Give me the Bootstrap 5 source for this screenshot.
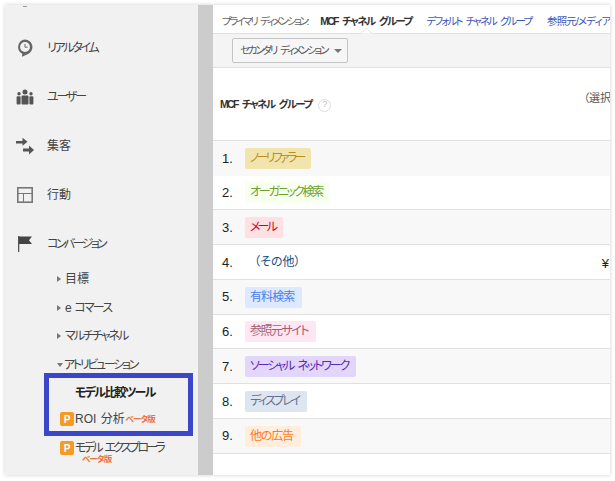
<!DOCTYPE html>
<html lang="ja"><head><meta charset="utf-8"><title>MCF</title>
<link href="https://cdn.jsdelivr.net/npm/bootstrap@5.3.0/dist/css/bootstrap.min.css" rel="stylesheet">
<style>
html,body{height:100%;}
body{background:#fff;font-family:"Liberation Sans","Noto Sans CJK JP",sans-serif;font-size:12px;color:#333;overflow:hidden;font-feature-settings:"palt";word-spacing:3px;}
.shell{position:relative;margin:5px 5px 0 5px;width:605px;height:470px;display:flex;box-shadow:0 0 4px rgba(0,0,0,.2);overflow:hidden;white-space:nowrap;}
.side{width:193px;flex:none;background:#f1f1f1;padding-top:1px;}
.stub{width:4px;height:1px;background:#999;margin:0 0 16px 18px;}
.gutter{width:15px;flex:none;background:#ccc;}
.main{flex:1;min-width:0;background:#fff;overflow:hidden;}
.top-item{height:49px;display:flex;align-items:center;color:#444;padding-top:1px;}
.top-item svg{width:18px;height:18px;margin-left:11px;margin-right:13px;flex:none;}
.subs{margin-top:-3px;}
.sub-item{height:28.5px;display:flex;align-items:center;padding-left:52px;color:#444;font-size:12px;}
.tri-r{width:0;height:0;border-left:4px solid #777;border-top:3.5px solid transparent;border-bottom:3.5px solid transparent;margin-right:4px;}
.tri-d{width:0;height:0;border-top:4px solid #777;border-left:3.5px solid transparent;border-right:3.5px solid transparent;margin-right:1px;}
.picked{padding-left:70px;font-weight:700;color:#222;height:28px;display:flex;align-items:center;font-size:12px;}
.pro{display:flex;align-items:center;padding-left:55px;color:#444;font-size:12px;height:24px;}
.pro2{margin-top:5px;}
.roi{word-spacing:1px;}
.pmark{width:14px;height:14px;background:#f59a23;color:#fff;border-radius:2px;font-size:10px;font-weight:700;display:flex;align-items:center;justify-content:center;margin-right:1px;flex:none;}
.beta{color:#e8743b;font-size:8.5px;font-weight:700;letter-spacing:-.9px;}
.beta-in{margin-left:1px;}
.beta2{padding-left:77px;line-height:10px;margin-top:-6px;}
.frame{position:absolute;left:39px;top:368px;width:149px;height:63px;border:5px solid #3c46c8;}
.tabs{height:29px;border-bottom:1px solid #e0e0e0;display:flex;align-items:center;padding:6px 0 0 9px;font-size:10.5px;color:#666;position:relative;}
.tabs b{color:#333;margin-left:13px;letter-spacing:-1.7px;}
.tabs a{color:#3b55b5;text-decoration:none;margin-left:15px;letter-spacing:-1.9px;}
.tabs a.ref{letter-spacing:-.9px;margin-left:16px;}
.tabs i{position:absolute;left:149px;bottom:-5px;width:9px;height:9px;background:#fff;border-top:1px solid #e0e0e0;border-left:1px solid #e0e0e0;transform:rotate(45deg);clip-path:polygon(0 0,100% 0,0 100%);}
.bar{height:34px;background:#f4f4f4;border-bottom:1px solid #e0e0e0;padding:4px 0 0 19px;}
.sel{height:25px;width:116px;padding:0 5px 0 7px;border:1px solid #c4c4c4;border-radius:2px;background:#f6f6f6;display:flex;align-items:center;justify-content:space-between;color:#555;font-size:10.5px;letter-spacing:-2.2px;}
.caret-d{width:0;height:0;border-top:4px solid #777;border-left:4px solid transparent;border-right:4px solid transparent;margin-right:0;}
.head{height:73px;border-bottom:1px solid #e0e0e0;display:flex;align-items:center;padding:2px 0 0 7px;position:relative;font-weight:700;font-size:10.5px;color:#333;}
.head-t{letter-spacing:-1.7px;}
.help{width:13px;height:13px;border:1px solid #ddd;border-radius:50%;color:#bbb;font-size:9px;font-weight:400;display:flex;align-items:center;justify-content:center;margin-left:7px;}
.sel-note{position:absolute;right:-1px;top:22px;font-weight:400;font-size:11px;color:#555;}
.line{height:34.75px;display:flex;align-items:center;border-bottom:1px solid #e0e0e0;position:relative;font-size:13px;color:#222;padding-top:1px;}
.line.alt{background:#f8f8f8;}
.line.first{border-bottom:0;height:34.5px;padding-top:0;}
.num{width:32px;padding-left:9px;flex:none;}
.tag{padding:0 8px 0 5px;height:21px;line-height:21px;border-radius:2px;font-size:12px;}
.t1{background:#f1e4ac;color:#b8901e;letter-spacing:-2.8px;}.t2{background:#f7ffee;color:#6e9e2e;letter-spacing:-2.2px;}.t3{background:#ffe0e3;color:#d0021b;letter-spacing:-2.8px;}.t4{color:#1d4f80;padding-left:9px;}.t5{background:#dde9ff;color:#4a80ee;letter-spacing:-.9px;}.t6{background:#ffe6f3;color:#a06070;letter-spacing:-1.5px;}.t7{background:#e2d6fa;color:#5a2ab8;letter-spacing:-2.1px;}.t8{background:#dde5f0;color:#5f7390;letter-spacing:-2.3px;}.t9{background:#ffeedd;color:#ff7a22;letter-spacing:-1.2px;}
.yen{position:absolute;right:1px;top:9px;font-size:13px;}
.k2{letter-spacing:-2px;}.k18{letter-spacing:-1.8px;}.k17{letter-spacing:-1.7px;}.k22{letter-spacing:-2.2px;}.k23{letter-spacing:-2.3px;}.k26{letter-spacing:-2.6px;}.k27{letter-spacing:-2.7px;}
</style></head><body>
<div class="shell">
<nav class="side">
<div class="stub"></div>
<div class="top-item"><svg viewBox="0 0 18 18"><path fill="#666" d="M9 .5a7.6 7.6 0 0 1 2.600 14.700L6 17.800l.2-3A7.600 7.600 0 0 1 9 .5z"/><circle cx="9" cy="8" r="4.900" fill="#f1f1f1"/><path d="M9 5v3.200h2.600" fill="none" stroke="#666" stroke-width="1"/></svg><span class="k23">リアルタイム</span></div>
<div class="top-item"><svg viewBox="0 0 18 18" fill="#555"><circle cx="9" cy="4" r="2.500"/><circle cx="3" cy="5.700" r="1.700"/><circle cx="15" cy="5.700" r="1.700"/><rect x="5.500" y="7.400" width="7" height="9" rx="1"/><rect x=".6" y="8.200" width="4" height="8.200" rx="1"/><rect x="13.400" y="8.200" width="4" height="8.200" rx="1"/></svg><span class="k22">ユーザー</span></div>
<div class="top-item"><svg viewBox="0 0 18 18" fill="#555"><path d="M0 4h6.500V.8l5 4-5 4V6.500H0z"/><path d="M7 11.500h6V8.500l5 4.500-5 4.500v-3H7z"/></svg><span>集客</span></div>
<div class="top-item"><svg viewBox="0 0 18 18" fill="none" stroke="#777" stroke-width="1.600"><rect x="1.800" y="1.800" width="14.400" height="14.400"/><path d="M2 7.500h14M7.500 7.500V16" stroke-width="1"/></svg><span>行動</span></div>
<div class="top-item"><svg viewBox="0 0 18 18"><path fill="#555" d="M2 1h1.300v16H2z"/><path fill="#444" d="M3 1.500h13l-3 3.800 3 3.800H3z"/></svg><span class="k26">コンバージョン</span></div>
<div class="subs">
<div class="sub-item"><span class="tri-r"></span>目標</div>
<div class="sub-item"><span class="tri-r"></span><span class="k18">e コマース</span></div>
<div class="sub-item"><span class="tri-r"></span><span class="k2">マルチチャネル</span></div>
<div class="sub-item"><span class="tri-d"></span><span class="k23">アトリビューション</span></div>
</div>
<div class="picked"><span class="k17">モデル比較ツール</span></div>
<div class="pro"><span class="pmark">P</span><span class="roi">ROI 分析</span><span class="beta beta-in">ベータ版</span></div>
<div class="pro pro2"><span class="pmark">P</span><span class="k27">モデル エクスプローラ</span></div>
<div class="beta beta2">ベータ版</div>
</nav>
<div class="gutter"></div>
<main class="main">
<div class="tabs"><span class="k23">プライマリ ディメンション:</span><b>MCF チャネル グループ</b><a href="#">デフォルト チャネル グループ</a><a class="ref" href="#">参照元/メディア</a><i></i></div>
<div class="bar"><div class="sel"><span>セカンダリ ディメンション</span><span class="caret-d"></span></div></div>
<div class="head"><span class="head-t">MCF チャネル グループ</span><span class="help">?</span><span class="sel-note">（選択</span></div>
<div class="line alt first"><span class="num">1.</span><span class="tag t1">ノーリファラー</span></div>
<div class="line"><span class="num">2.</span><span class="tag t2">オーガニック検索</span></div>
<div class="line alt"><span class="num">3.</span><span class="tag t3">メール</span></div>
<div class="line"><span class="num">4.</span><span class="tag t4">（その他）</span><span class="yen">¥</span></div>
<div class="line alt"><span class="num">5.</span><span class="tag t5">有料検索</span></div>
<div class="line"><span class="num">6.</span><span class="tag t6">参照元サイト</span></div>
<div class="line alt"><span class="num">7.</span><span class="tag t7">ソーシャル ネットワーク</span></div>
<div class="line"><span class="num">8.</span><span class="tag t8">ディスプレイ</span></div>
<div class="line alt"><span class="num">9.</span><span class="tag t9">他の広告</span></div>
</main>
<div class="frame"></div>
</div>
</body></html>
